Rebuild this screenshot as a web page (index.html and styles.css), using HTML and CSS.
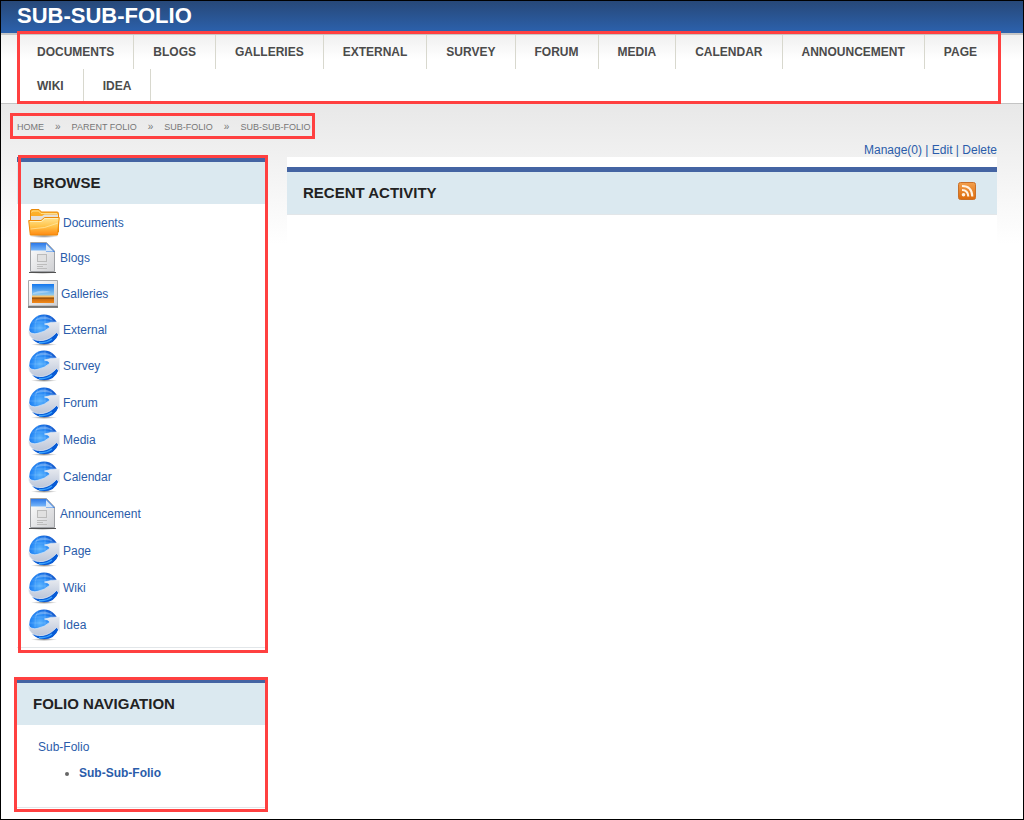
FILE: index.html
```html
<!DOCTYPE html>
<html lang="en">
<head>
<meta charset="utf-8">
<meta name="viewport" content="width=device-width, initial-scale=1">
<title>Sub-Sub-Folio</title>
<link rel="stylesheet" href="styles.css">
</head>

<body>
<!-- shared icons -->
<svg class="sprite" width="0" height="0" aria-hidden="true">
  <defs>
    <linearGradient id="gFolder" x1="0" y1="0" x2="0" y2="1">
      <stop offset="0" stop-color="#ffe493"/><stop offset=".5" stop-color="#ffc44a"/><stop offset="1" stop-color="#ff8a12"/>
    </linearGradient>
    <linearGradient id="gFolderBack" x1="0" y1="0" x2="0" y2="1">
      <stop offset="0" stop-color="#ffb62e"/><stop offset="1" stop-color="#f59410"/>
    </linearGradient>
    <linearGradient id="gPaper" x1="0" y1="0" x2="1" y2="1">
      <stop offset="0" stop-color="#ffffff"/><stop offset="1" stop-color="#cfd0d3"/>
    </linearGradient>
    <linearGradient id="gBlue" x1="0" y1="0" x2="0" y2="1">
      <stop offset="0" stop-color="#2b78e8"/><stop offset="1" stop-color="#79b8fa"/>
    </linearGradient>
    <linearGradient id="gSky" x1="0" y1="0" x2="0" y2="1">
      <stop offset="0" stop-color="#1377ee"/><stop offset=".55" stop-color="#8cc7ed"/><stop offset=".66" stop-color="#f9c36b"/><stop offset=".75" stop-color="#c3660d"/><stop offset="1" stop-color="#f38a1b"/>
    </linearGradient>
    <radialGradient id="gBall" cx=".36" cy=".45" r=".62">
      <stop offset="0" stop-color="#5fb6ff"/><stop offset=".5" stop-color="#2487f5"/><stop offset="1" stop-color="#0b4cc4"/>
    </radialGradient>
    <linearGradient id="gArrow" x1="0" y1="0" x2="0" y2="1">
      <stop offset="0" stop-color="#e6e9ef"/><stop offset="1" stop-color="#bcc6d9"/>
    </linearGradient>
    <linearGradient id="gRss" x1="0" y1="0" x2="0" y2="1">
      <stop offset="0" stop-color="#f3a04d"/><stop offset="1" stop-color="#dc6a0b"/>
    </linearGradient>
    <radialGradient id="gShade">
      <stop offset="0" stop-color="#000" stop-opacity=".45"/><stop offset="1" stop-color="#000" stop-opacity="0"/>
    </radialGradient>
  </defs>
  <symbol id="folder" viewBox="0 0 32 32">
    <ellipse cx="16" cy="29" rx="15" ry="2" fill="url(#gShade)"/>
    <path d="M2.500 10V4Q2.500 2.500 4 2.500H11L13.500 5H29Q30.500 5 30.500 6.500V25H2.500z" fill="url(#gFolderBack)" stroke="#e88a0a"/>
    <path d="M3.500 5.500L4.500 4H10.500L13 6.500H29" fill="none" stroke="#ffdf8a"/>
    <path d="M3 9H14L16.500 7.500H30V14H3z" fill="#e4e0d8"/>
    <path d="M.7 13.500H13L16.500 10.500H31.300L29.500 28H2.300z" fill="url(#gFolder)" stroke="#ee8a08"/>
    <path d="M2 14.500H13.500L17 11.500H30" fill="none" stroke="#fff0b8"/>
    <path d="M2.500 22Q17 22 30 16" fill="none" stroke="#ffe9a8" stroke-opacity=".7"/>
  </symbol>
  <symbol id="doc" viewBox="0 0 29 32">
    <ellipse cx="14.500" cy="30.500" rx="14" ry="1.500" fill="url(#gShade)"/>
    <path d="M2.500.5H18.500L26.500 9V29.500H2.500z" fill="url(#gPaper)" stroke="#9fa1a5"/>
    <path d="M3 1H18V8.500H3z" fill="url(#gBlue)"/>
    <path d="M18 .5L27 10H18z" fill="#3b80e0"/>
    <path d="M18 9.500V2L25.500 9.500z" fill="#d6e6f8"/>
    <rect x="9.500" y="12.500" width="9" height="7" fill="#e1e1e1" stroke="#bbb"/>
    <path d="M9 22.500H19M9 24.500H15M9 26.500H19" stroke="#bcbcbc"/>
    <path d="M1 30.500H28" stroke="#515151"/>
  </symbol>
  <symbol id="photo" viewBox="0 0 30 28">
    <path d="M.5.5H29.500V26H.5z" fill="url(#gPaper)" stroke="#a7a8aa"/>
    <rect x="4" y="4" width="22" height="19" fill="url(#gSky)"/>
    <path d="M4 17.500H26V19H4z" fill="#8f510e" fill-opacity=".7"/>
    <path d="M5 13Q13 9 23 12Q14 13 5 14z" fill="#fff" fill-opacity=".35"/>
    <path d="M0 27H30" stroke="#555" stroke-width="1.500"/>
  </symbol>
  <symbol id="globe" viewBox="0 0 32 32">
    <ellipse cx="16" cy="30.500" rx="13" ry="1.500" fill="url(#gShade)"/>
    <circle cx="16" cy="15.300" r="14.700" fill="url(#gBall)"/>
    <path d="M4 8H28M2 14H20M10 1.500Q6 9 7 18M17 1V17M23 3V8" fill="none" stroke="#a9dcff" stroke-opacity=".25"/>
    <path d="M6 7Q15-2 26 7Q17 3 6 7z" fill="#fff" fill-opacity=".3"/>
    <path d="M4 25Q14 30 22 24Q26 21 28 19L30.500 20Q27 30 16 30Q9 30 4 25z" fill="#075bd6"/>
    <path d="M11 28.500Q18 29.500 24 25" fill="none" stroke="#3aa4ff" stroke-width="1.500"/>
    <path d="M.6 16.500Q3 20.500 9 19.500Q17 18 22 13Q20 10.500 16.500 10Q24 7.500 31.700 8V22.500Q30.500 20.500 28.500 18.500Q23 25 15 26.500Q5 27.500 1.500 21.500Q.5 19 .6 16.500z" fill="url(#gArrow)" stroke="#f4f6fa" stroke-width=".6"/>
  </symbol>
  <symbol id="rss" viewBox="0 0 18 18">
    <rect x=".5" y=".5" width="17" height="17" rx="2" fill="url(#gRss)" stroke="#c8702a"/>
    <circle cx="5.500" cy="12.800" r="1.800" fill="#fff3e4"/>
    <path d="M4 8Q10 8 10.300 14.500M4 4Q14 4 14.300 14.500" fill="none" stroke="#fff3e4" stroke-width="2.100"/>
  </symbol>
</svg>

<header class="banner">
  <h1>SUB-SUB-FOLIO</h1>
</header>

<nav class="menubar">
  <ul class="menu marked">
    <li><a href="#">DOCUMENTS</a></li>
    <li><a href="#">BLOGS</a></li>
    <li><a href="#">GALLERIES</a></li>
    <li><a href="#">EXTERNAL</a></li>
    <li><a href="#">SURVEY</a></li>
    <li><a href="#">FORUM</a></li>
    <li><a href="#">MEDIA</a></li>
    <li><a href="#">CALENDAR</a></li>
    <li><a href="#">ANNOUNCEMENT</a></li>
    <li class="plain"><a href="#">PAGE</a></li>
    <li><a href="#">WIKI</a></li>
    <li><a href="#">IDEA</a></li>
  </ul>
</nav>

<div class="content">
  <nav class="crumbs marked">
    <a href="#">HOME</a><span>»</span>
    <a href="#">PARENT FOLIO</a><span>»</span>
    <a href="#">SUB-FOLIO</a><span>»</span>
    <a href="#">SUB-SUB-FOLIO</a>
  </nav>

  <div class="actions">
    <a href="#">Manage(0)</a> | <a href="#">Edit</a> | <a href="#">Delete</a>
  </div>

  <div class="columns">
    <aside class="sidebar">
      <section class="widget browse marked">
        <h2>BROWSE</h2>
        <ul class="apps">
          <li class="short"><a href="#"><svg class="icon" width="32" height="32"><use href="#folder"/></svg>Documents</a></li>
          <li class="short"><a href="#"><svg class="icon" width="29" height="32"><use href="#doc"/></svg>Blogs</a></li>
          <li><a href="#"><svg class="icon" width="30" height="28"><use href="#photo"/></svg>Galleries</a></li>
          <li class="short"><a href="#"><svg class="icon" width="32" height="32"><use href="#globe"/></svg>External</a></li>
          <li><a href="#"><svg class="icon" width="32" height="32"><use href="#globe"/></svg>Survey</a></li>
          <li><a href="#"><svg class="icon" width="32" height="32"><use href="#globe"/></svg>Forum</a></li>
          <li><a href="#"><svg class="icon" width="32" height="32"><use href="#globe"/></svg>Media</a></li>
          <li><a href="#"><svg class="icon" width="32" height="32"><use href="#globe"/></svg>Calendar</a></li>
          <li><a href="#"><svg class="icon" width="29" height="32"><use href="#doc"/></svg>Announcement</a></li>
          <li><a href="#"><svg class="icon" width="32" height="32"><use href="#globe"/></svg>Page</a></li>
          <li><a href="#"><svg class="icon" width="32" height="32"><use href="#globe"/></svg>Wiki</a></li>
          <li><a href="#"><svg class="icon" width="32" height="32"><use href="#globe"/></svg>Idea</a></li>
        </ul>
      </section>

      <section class="widget folios marked">
        <h2>FOLIO NAVIGATION</h2>
        <div class="tree">
          <a href="#">Sub-Folio</a>
          <ul>
            <li><a href="#">Sub-Sub-Folio</a></li>
          </ul>
        </div>
      </section>
    </aside>

    <main class="main">
      <section class="widget activity">
        <h2>RECENT ACTIVITY
          <a href="#" aria-label="RSS feed"><svg class="icon" width="18" height="18"><use href="#rss"/></svg></a>
        </h2>
      </section>
    </main>
  </div>
</div>
</body>
</html>
```
FILE: styles.css
```css
* {
    box-sizing: border-box;
}

body {
    margin: 0;
    min-height: 100vh;
    border: 1px solid #000;
    background: #fff;
    color: #2a5caa;
    font: 12px/14px "Liberation Sans", Arial, Helvetica, sans-serif;
}

a {
    color: #2a5caa;
    text-decoration: none;
}

ul {
    list-style: none;
    margin: 0;
    padding: 0;
}

.sprite {
    position: absolute;
}

.icon {
    display: block;
    flex: none;
}

/* red frames around the highlighted parts */
.marked {
    position: relative;
}

.marked::after {
    content: "";
    position: absolute;
    border: 3px solid #ff4040;
    pointer-events: none;
}

/* header */
.banner {
    height: 32px;
    padding-left: 16px;
    background: linear-gradient(#274878, #2c62ae);
}

.banner h1 {
    margin: 0;
    color: #fff;
    font-size: 22px;
    line-height: 30px;
}

.menubar {
    padding: 0 23px 0 17px;
    border-top: 2px solid #c6c6c6;
    border-bottom: 1px solid #c4c4c4;
    background: linear-gradient(#f0f0f0, #fff 24px);
}

.menu {
    display: flex;
    flex-wrap: wrap;
}

.menu::after {
    inset: -4px -1px -1px -1px;
}

.menu li {
    border-right: 1px solid #d8d8ce;
}

.menu li.plain {
    border-right: none;
}

.menu a {
    display: block;
    padding: 0 19px;
    color: #4b4b4b;
    font-weight: bold;
    line-height: 34px;
}

/* page body */
.content {
    padding: 16px 26px 11px 16px;
    background: linear-gradient(#e8e8e8, #fff 140px);
}

.crumbs {
    display: flex;
    gap: 11px;
    width: fit-content;
    margin-bottom: 9px;
    color: #777;
    font-size: 9px;
}

.crumbs::after {
    inset: -7px -5px -5px -7px;
}

.crumbs a {
    color: #777;
}

.crumbs span {
    font-size: 10px;
}

.actions {
    text-align: right;
}

.columns {
    display: flex;
    gap: 20px;
}

.sidebar {
    display: flex;
    flex-direction: column;
    gap: 30px;
    width: 250px;
}

.main {
    flex: 1;
    padding-top: 10px;
    background: #fff;
}

.widget {
    border-top: 5px solid #4464a3;
    border-bottom: 1px solid #e2e6e9;
    background: #fff;
}

.widget h2 {
    display: flex;
    align-items: center;
    justify-content: space-between;
    margin: 0;
    padding: 0 21px 0 16px;
    background: #dbe9f0;
    color: #222;
    font-size: 15px;
    line-height: 42px;
}

.activity h2 a {
    padding-bottom: 4px;
}

.browse::after {
    inset: -7px -1px -6px 1px;
}

.folios::after {
    inset: -6px -1px -5px -3px;
}

.apps {
    padding: 1px 0 4px 11px;
}

.apps li {
    display: flex;
    align-items: center;
    height: 37px;
}

.apps li.short {
    height: 35px;
}

.apps a {
    display: flex;
    align-items: center;
    gap: 3px;
}

.tree {
    padding: 15px 21px 27px;
}

.tree ul {
    margin-top: 12px;
    padding-left: 41px;
    list-style: disc;
}

.tree li {
    font-weight: bold;
}

.tree li::marker {
    color: #666;
}
```
